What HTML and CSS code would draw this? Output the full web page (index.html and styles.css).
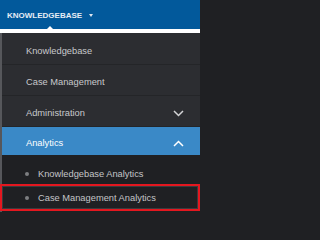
FILE: index.html
```html
<!DOCTYPE html>
<html>
<head>
<meta charset="utf-8">
<link rel="stylesheet" href="styles.css">
</head>
<body>
<div class="topbar">
  <span class="brand">KNOWLEDGEBASE</span>
  <span class="caret"></span>
  <span class="pointer"></span>
</div>
<div class="strip"></div>
<div class="panel">
  <div class="row first">Knowledgebase</div>
  <div class="row">Case Management</div>
  <div class="row">Administration
    <svg class="chev" width="11" height="7" viewBox="0 0 11 7"><polyline points="1,1 5.5,5.5 10,1" fill="none" stroke="#d4d4d6" stroke-width="1.5"/></svg>
  </div>
  <div class="row active">Analytics
    <svg class="chev" width="11" height="7" viewBox="0 0 11 7"><polyline points="1,6 5.5,1.5 10,6" fill="none" stroke="#ffffff" stroke-width="1.5"/></svg>
  </div>
  <div class="sub">
    <div class="subitem"><span class="dot"></span>Knowledgebase Analytics</div>
    <div class="subitem selected"><span class="dot"></span>Case Management Analytics</div>
  </div>
</div>
</body>
</html>
```
FILE: styles.css
```css
html, body {
  margin: 0;
  padding: 0;
  width: 200px;
  height: 212px;
  overflow: hidden;
  background: #1f2023;
  font-family: "Liberation Sans", Arial, sans-serif;
}
.topbar {
  position: relative;
  height: 29px;
  background: #02599b;
  display: flex;
  align-items: center;
  padding-left: 7px;
  gap: 7px;
}
.brand {
  color: #e6edf5;
  font-weight: bold;
  font-size: 8px;
  padding-top: 1px;
}
.caret {
  width: 0;
  height: 0;
  border-left: 2.5px solid transparent;
  border-right: 2.5px solid transparent;
  border-top: 3px solid #dfe7f0;
  margin-top: 1px;
}
.pointer {
  position: absolute;
  left: 47px;
  bottom: 0;
  width: 0;
  height: 0;
  border-left: 3.5px solid transparent;
  border-right: 3.5px solid transparent;
  border-bottom: 3.5px solid #ffffff;
}
.strip {
  height: 4px;
  background: #ffffff;
}
.panel {
  border-left: 2px solid #56575b;
  background: #2c2d31;
  height: 179px;
  display: flex;
  flex-direction: column;
}
.row {
  box-sizing: border-box;
  height: 31px;
  border-bottom: 1px solid #242528;
  display: flex;
  align-items: center;
  padding: 4px 16px 0 24px;
  color: #c8c9cc;
  font-size: 9.3px;
}
.row.first {
  height: 32px;
  padding-top: 5px;
}
.row .chev {
  margin-left: auto;
}
.row.active {
  height: 28px;
  border-bottom: none;
  background: #3a89c7;
  color: #ffffff;
}
.sub {
  flex: 1;
  background: #1f2023;
  padding-top: 8px;
  display: flex;
  flex-direction: column;
}
.subitem {
  height: 21px;
  display: flex;
  align-items: center;
  padding-left: 23px;
  color: #c4c5c8;
  font-size: 9.3px;
}
.dot {
  width: 4px;
  height: 4px;
  border-radius: 50%;
  background: #7d7e81;
  margin-right: 9px;
}
.subitem.selected {
  height: 23px;
  margin-left: -2px;
  padding-left: 23px;
  border: 2px solid #e3171f;
  box-shadow: inset 0 0 0 1px #3a3b3e;
}
```
